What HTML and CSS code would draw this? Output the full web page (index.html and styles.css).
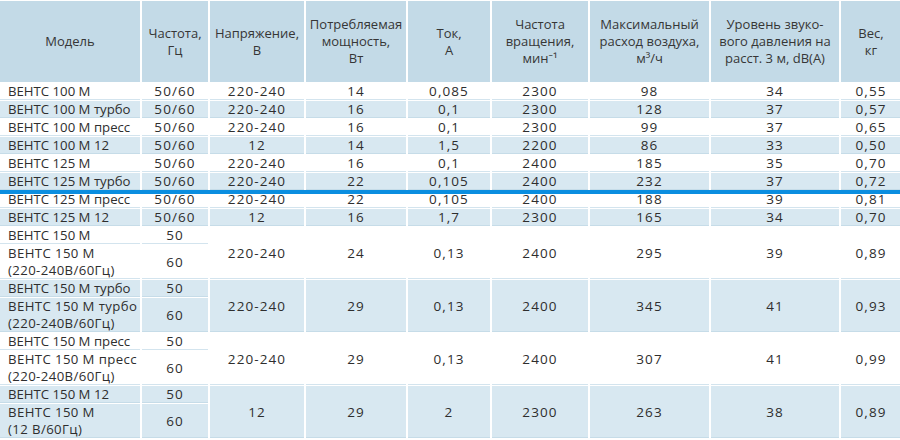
FILE: index.html
```html
<!DOCTYPE html>
<html lang="ru">
<head>
<meta charset="utf-8">
<title>ВЕНТС М</title>
<link rel="stylesheet" href="styles.css">
</head>
<body>
<div class="wrap">
<table class="specs">
<colgroup>
<col class="c1"><col class="c2"><col class="c3"><col class="c4"><col class="c5"><col class="c6"><col class="c7"><col class="c8"><col class="c9">
</colgroup>
<thead>
<tr>
<th>Модель</th>
<th>Частота,<br>Гц</th>
<th>Напряжение,<br>В</th>
<th>Потребляемая<br>мощность,<br>Вт</th>
<th>Ток,<br>А</th>
<th>Частота<br>вращения,<br>мин⁻¹</th>
<th>Максимальный<br>расход воздуха,<br>м³/ч</th>
<th>Уровень звуко-<br>вого давления на<br>расст. 3 м, dB(A)</th>
<th>Вес,<br>кг</th>
</tr>
</thead>
<tbody>
<tr><td class="m">ВЕНТС 100 М</td><td>50/60</td><td>220-240</td><td>14</td><td>0,085</td><td>2300</td><td>98</td><td>34</td><td>0,55</td></tr>
<tr class="alt"><td class="m">ВЕНТС 100 М турбо</td><td>50/60</td><td>220-240</td><td>16</td><td>0,1</td><td>2300</td><td>128</td><td>37</td><td>0,57</td></tr>
<tr><td class="m">ВЕНТС 100 М пресс</td><td>50/60</td><td>220-240</td><td>16</td><td>0,1</td><td>2300</td><td>99</td><td>37</td><td>0,65</td></tr>
<tr class="alt"><td class="m">ВЕНТС 100 М 12</td><td>50/60</td><td>12</td><td>14</td><td>1,5</td><td>2200</td><td>86</td><td>33</td><td>0,50</td></tr>
<tr><td class="m">ВЕНТС 125 М</td><td>50/60</td><td>220-240</td><td>16</td><td>0,1</td><td>2400</td><td>185</td><td>35</td><td>0,70</td></tr>
<tr class="alt"><td class="m">ВЕНТС 125 М турбо</td><td>50/60</td><td>220-240</td><td>22</td><td>0,105</td><td>2400</td><td>232</td><td>37</td><td>0,72</td></tr>
<tr><td class="m">ВЕНТС 125 М пресс</td><td>50/60</td><td>220-240</td><td>22</td><td>0,105</td><td>2400</td><td>188</td><td>39</td><td>0,81</td></tr>
<tr class="alt"><td class="m">ВЕНТС 125 М 12</td><td>50/60</td><td>12</td><td>16</td><td>1,7</td><td>2300</td><td>165</td><td>34</td><td>0,70</td></tr>

<tr><td class="m">ВЕНТС 150 М</td><td>50</td><td rowspan="2">220-240</td><td rowspan="2">24</td><td rowspan="2">0,13</td><td rowspan="2">2400</td><td rowspan="2">295</td><td rowspan="2">39</td><td rowspan="2">0,89</td></tr>
<tr><td class="m two">ВЕНТС 150 М<br>(220-240В/60Гц)</td><td>60</td></tr>

<tr class="alt"><td class="m">ВЕНТС 150 М турбо</td><td>50</td><td rowspan="2">220-240</td><td rowspan="2">29</td><td rowspan="2">0,13</td><td rowspan="2">2400</td><td rowspan="2">345</td><td rowspan="2">41</td><td rowspan="2">0,93</td></tr>
<tr class="alt"><td class="m two">ВЕНТС 150 М турбо<br>(220-240В/60Гц)</td><td>60</td></tr>

<tr><td class="m">ВЕНТС 150 М пресс</td><td>50</td><td rowspan="2">220-240</td><td rowspan="2">29</td><td rowspan="2">0,13</td><td rowspan="2">2400</td><td rowspan="2">307</td><td rowspan="2">41</td><td rowspan="2">0,99</td></tr>
<tr><td class="m two">ВЕНТС 150 М пресс<br>(220-240В/60Гц)</td><td>60</td></tr>

<tr class="alt"><td class="m">ВЕНТС 150 М 12</td><td>50</td><td rowspan="2">12</td><td rowspan="2">29</td><td rowspan="2">2</td><td rowspan="2">2300</td><td rowspan="2">263</td><td rowspan="2">38</td><td rowspan="2">0,89</td></tr>
<tr class="alt"><td class="m two">ВЕНТС 150 М<br>(12 В/60Гц)</td><td>60</td></tr>
</tbody>
</table>
<div class="drop-line"></div>
</div>
</body>
</html>
```

FILE: styles.css
```css
html, body {
  margin: 0;
  padding: 0;
  background: #ffffff;
  overflow: hidden;
}

.wrap {
  position: relative;
  width: 900px;
  height: 440px;
  overflow: hidden;
}

.specs {
  table-layout: fixed;
  width: 905px;
  margin-left: -2px;
  border-collapse: separate;
  border-spacing: 2px 1px;
  font-family: "Open Sans", "Noto Sans", sans-serif;
  font-size: 13.5px;
  color: #2e2e2e;
}

.c1 { width: 140px; }
.c2 { width: 66px; }
.c3 { width: 94px; }
.c4 { width: 100px; }
.c5 { width: 82px; }
.c6 { width: 96px; }
.c7 { width: 119px; }
.c8 { width: 128px; }
.c9 { width: 60px; }

.specs th {
  height: 81px;
  padding: 0;
  background: #c3dae7;
  font-weight: normal;
  font-size: 13px;
  line-height: 17px;
  text-align: center;
  vertical-align: middle;
  color: #363636;
}

.specs td {
  padding: 0;
  line-height: 16px;
  text-align: center;
  vertical-align: middle;
  letter-spacing: 1.1px;
  background: #ffffff;
  border-bottom: 1px solid #d3e4ee;
  white-space: nowrap;
}

.specs tr.alt td {
  background: #d8e8f1;
  border-bottom-color: #c6dce8;
}

.specs td.m {
  text-align: left;
  padding-left: 8px;
  font-size: 13.2px;
  letter-spacing: 0;
}

.specs td.two {
  line-height: 16.5px;
  letter-spacing: 0.4px;
}

.drop-line {
  position: absolute;
  left: 0;
  right: 0;
  top: 190px;
  height: 4px;
  background: #0a8ee0;
}
```
